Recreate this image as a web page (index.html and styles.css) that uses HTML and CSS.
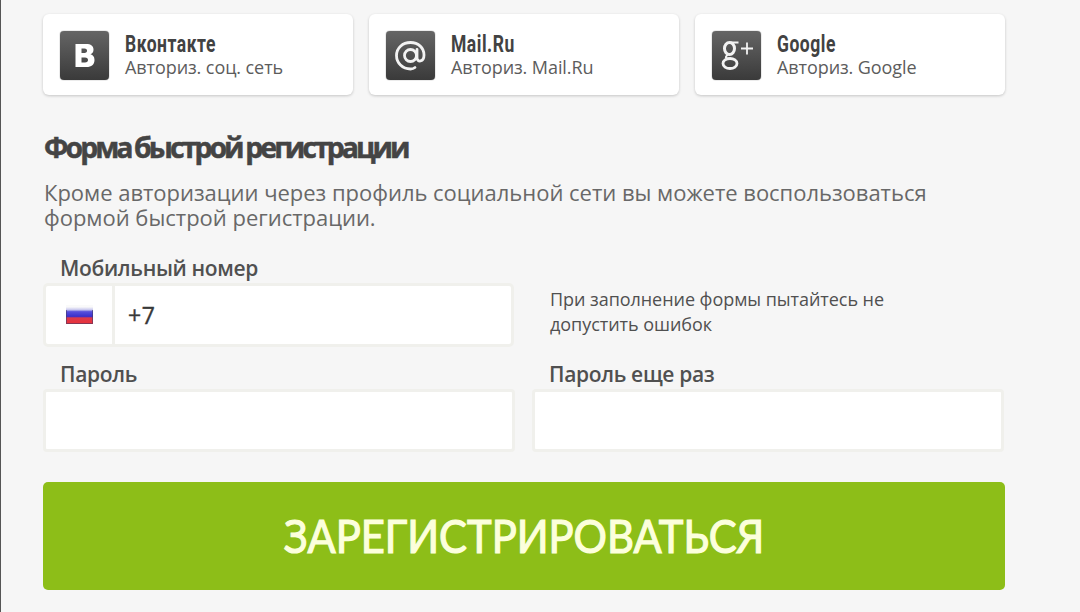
FILE: index.html
```html
<!DOCTYPE html>
<html lang="ru">
<head>
  <meta charset="UTF-8">
  <title>Регистрация</title>
  <link rel="stylesheet" href="styles.css">
</head>
<body>
  <div class="page">
    <div class="socials">
      <a class="social">
        <svg class="icon" viewBox="0 0 49 49">
          <path fill="#fff" fill-rule="evenodd" d="M15.500 13h10.500c5 0 7.500 2 7.500 5.500 0 2.500-1 4-3 4.800 2.500.7 4 2.500 4 5.700 0 4.500-3 7-8 7h-11zM21.500 17.500v4.500h3c3.500 0 3.500-4.500 0-4.500zM21.500 26.500v5h3.500c4 0 4-5 0-5z"/>
        </svg>
        <span class="text"><b>Вконтакте</b><small>Авториз. соц. сеть</small></span>
      </a>
      <a class="social">
        <svg class="icon" viewBox="0 0 49 49" fill="none" stroke="#f2f2f2" stroke-width="2.800" stroke-linecap="round">
          <circle cx="24.500" cy="24.500" r="6"/>
          <path d="M31 18.500v8c0 5.500 7 4.500 7-2.500 0-7-5.500-12.500-13.500-12.500S10.500 17 10.500 24.500 16.500 38 24.500 38c2 0 3-.3 4.500-1.500"/>
        </svg>
        <span class="text"><b>Mail.Ru</b><small>Авториз. Mail.Ru</small></span>
      </a>
      <a class="social">
        <svg class="icon" viewBox="0 0 49 49" fill="none" stroke="#f2f2f2">
          <ellipse cx="17.500" cy="17.500" rx="5" ry="6" stroke-width="3"/>
          <path stroke-width="2" d="M18 11.500h8.500M16 23.500c-3 2.500-3 4 1 4"/>
          <ellipse cx="18" cy="32.500" rx="7" ry="5" stroke-width="2.800"/>
          <path stroke-width="1.800" d="M29 17.500h12M35 11.500v12"/>
        </svg>
        <span class="text"><b>Google</b><small>Авториз. Google</small></span>
      </a>
    </div>

    <h1>Форма быстрой регистрации</h1>
    <p class="intro">Кроме авторизации через профиль социальной сети вы можете воспользоваться<br>формой быстрой регистрации.</p>

    <form>
      <div class="row">
        <div class="field">
          <label for="phone">Мобильный номер</label>
          <div class="phone">
            <span class="country">
              <svg class="flag" viewBox="0 0 27 20">
                <defs>
                  <linearGradient id="flag" x2="0" y2="1">
                    <stop offset=".1" stop-color="#fafafa"/>
                    <stop offset=".25" stop-color="#c9c8ee"/>
                    <stop offset=".35" stop-color="#5850dc"/>
                    <stop offset=".6" stop-color="#3a30cc"/>
                    <stop offset=".68" stop-color="#dc3a4c"/>
                    <stop offset="1" stop-color="#ea3038"/>
                  </linearGradient>
                </defs>
                <path fill="url(#flag)" d="M0 0h27v19H0z"/>
                <path fill="none" stroke="#443a68" stroke-opacity=".6" d="M.5 5v13.500h26V5"/>
              </svg>
            </span>
            <input type="tel" id="phone" value="+7">
          </div>
        </div>
        <p class="hint">При заполнение формы пытайтесь не<br>допустить ошибок</p>
      </div>
      <div class="row">
        <div class="field">
          <label for="password">Пароль</label>
          <input type="password" id="password">
        </div>
        <div class="field">
          <label for="password2">Пароль еще раз</label>
          <input type="password" id="password2">
        </div>
      </div>
      <button type="button"><span>ЗАРЕГИСТРИРОВАТЬСЯ</span></button>
    </form>
  </div>
</body>
</html>
```
FILE: styles.css
```css
* { box-sizing: border-box; }
body { margin: 0; height: 612px; overflow: hidden; background: #f6f6f6; border-left: 1px solid #555; font-family: "Open Sans", "Noto Sans", sans-serif; color: #484848; }
.page { width: 962px; margin-left: 42px; padding-top: 14px; }

.socials { display: flex; gap: 16px; }
.social { display: flex; width: 310px; height: 81px; padding: 17px 17px 0; background: #fff; border-radius: 6px; box-shadow: 0 1px 3px rgba(0, 0, 0, .2); }
.icon { width: 49px; height: 49px; margin-right: 16px; border-radius: 4px; background: linear-gradient(#656565, #3a3a3a); box-shadow: 0 0 1px #333; }
.text b, .text small { display: block; width: max-content; white-space: nowrap; }
.text b { font: bold 23.5px/26px Roboto, sans-serif; letter-spacing: .7px; color: #424242; transform: scaleX(.745); transform-origin: 0 50%; }
.text small { font-size: 18px; line-height: 21px; letter-spacing: -.08px; color: #5c5c5c; }

h1 { margin: 35px 0 0 1px; font-size: 28.5px; line-height: 35px; letter-spacing: -3px; word-spacing: -.8px; white-space: nowrap; color: #444; -webkit-text-stroke: .5px #444; }
.intro { margin: 15px 0 0 1px; font-size: 22px; line-height: 25px; letter-spacing: -.02px; white-space: nowrap; color: #686868; }

form { margin-top: 26px; }
.row { display: flex; gap: 17px; height: 106px; }
.field { width: 472px; }
label { display: block; height: 27px; padding-left: 17px; font-size: 21px; line-height: 24px; letter-spacing: -.33px; font-weight: 600; white-space: nowrap; color: #505050; }
input { display: block; width: 100%; height: 63px; padding: 0 14px; border: 3px solid #f0f0ec; border-radius: 4px; background: #fff; font: 23px "Open Sans", sans-serif; color: #383838; }
.phone { display: flex; width: 471px; height: 64px; border: 3px solid #f0f0ec; border-radius: 5px; background: #fff; }
.phone input { height: 57px; padding-left: 13px; border: 0; letter-spacing: .5px; -webkit-text-stroke: .4px #383838; }
.country { flex: none; width: 69px; border-right: 3px solid #f0f0ec; padding: 19px 0 0 20px; }
.flag { display: block; width: 27px; height: 20px; }
.hint { margin: 31px 0 0 18px; font-size: 18px; line-height: 25px; letter-spacing: -.05px; white-space: nowrap; color: #505050; }

button { display: flex; align-items: center; justify-content: center; width: 962px; height: 108px; margin-top: 14px; padding: 0; border: 0; border-radius: 5px; background: #8dbe18; color: #fcffdc; font: 46px Lato, sans-serif; }
button span { transform: scaleX(.907); -webkit-text-stroke: 1.2px #fcffdc; margin-top: -2px; }
```
